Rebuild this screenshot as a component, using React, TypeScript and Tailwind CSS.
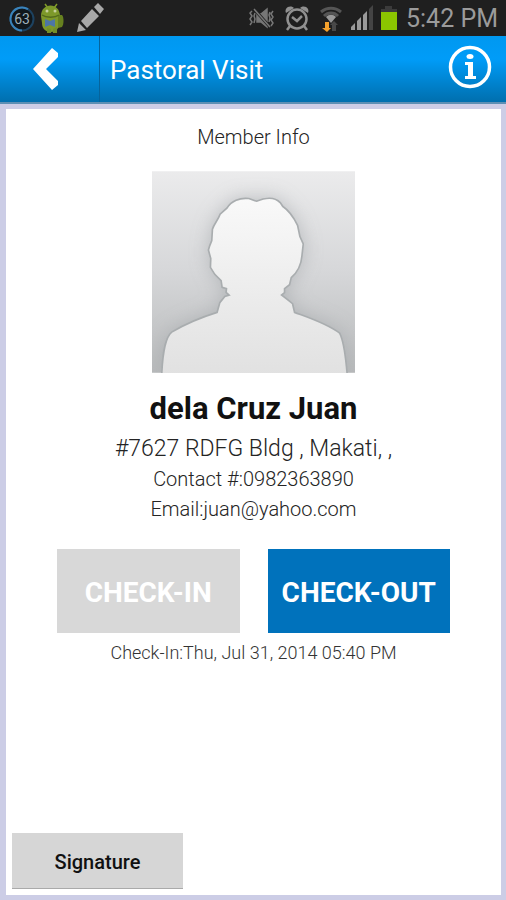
import type { ReactNode } from 'react';

const member = {
  name: 'dela Cruz Juan',
  address: '#7627 RDFG Bldg , Makati, ,',
  contact: '0982363890',
  email: 'juan@yahoo.com',
  checkIn: 'Thu, Jul 31, 2014 05:40 PM',
};

function StatusBar() {
  return (
    <div className="flex h-9 items-center justify-between bg-[#1f1f1f] pr-2 pl-2">
      <div className="flex items-center gap-2">
        <svg width="28" height="30" viewBox="0 0 28 30">
          <circle cx="14" cy="16" r="11.5" fill="#10171c" stroke="#1d4260" strokeWidth="2" />
          <path d="M14 27.5A11.5 11.5 0 1 1 20 6.2" fill="none" stroke="#3a83bb" strokeWidth="2" />
          <text x="14" y="21" textAnchor="middle" fontSize="14" fill="#9dafba" className="font-[Roboto]">63</text>
        </svg>
        <svg width="24" height="32" viewBox="0 0 24 32" className="-ml-1">
          <path d="m5 2 3 4m9-4-3 4" stroke="#829c28" strokeWidth="1.5" />
          <path d="M1 14C1 0 20 0 20 14l-1 7c0 6-3 9-8 9s-9-3-9-9z" fill="#7d992a" />
          <path d="M18 13h4c2 2 2 9 0 12l-4 1z" fill="#66801f" />
          <path d="M7 26v5h4v-4m2 0v4h4v-6" fill="#748e27" />
          <path d="M2 13c4 3 13 3 17 0" fill="none" stroke="#536b1b" strokeWidth="1.5" />
          <circle cx="7" cy="9" r="1.5" fill="#c5d09b" />
          <circle cx="15" cy="9" r="1.5" fill="#c5d09b" />
          <path d="m5 17 5 2 5-2v8l-5-2-5 2z" fill="#4d76a5" />
        </svg>
        <svg width="28" height="30" viewBox="0 0 28 30" className="ml-1">
          <path d="m1 29 2-9 7 7zM5 18 16 6l7 7-12 12zM18 4l4-4 6 6-4 5z" fill="#a8a8a8" />
        </svg>
      </div>
      <div className="flex items-center gap-1">
        <svg width="28" height="26" viewBox="0 0 28 26" className="mr-1" fill="none" stroke="#777" strokeWidth="1.5">
          <path d="M9 9h4l6-5v18l-6-5H9z" fill="#777" />
          <path d="m7 5 15 17" stroke="#222" strokeWidth="3" />
          <path d="m6 4 16 18M4 6 2 8l2 3-2 3 2 3-2 3M7 8l-1 3 1 3-1 4M22 7l-1 3 1 3-1 4M25 6l-2 3 2 3-2 3 2 3-2 3" />
        </svg>
        <svg width="26" height="28" viewBox="0 0 26 28" fill="none" stroke="#909090" strokeWidth="2.5">
          <circle cx="13" cy="15" r="9.5" />
          <path d="M2 9C0 5 5 0 10 4zM24 9c2-4-3-9-8-5z" fill="#909090" stroke="none" />
          <path d="m6 22-3 4m17-4 3 4M8 13l5 4 5-5" />
        </svg>
        <svg width="28" height="28" viewBox="0 0 28 28" className="ml-1">
          <path d="M3 8c6-5 14-5 20 0M6 12c4-4 10-4 14 0" fill="none" stroke="#555" strokeWidth="3" />
          <path d="M8 13c3-3 7-3 10 0l-5 6z" fill="#999" />
          <path d="M7 18h4v6h2l-4 4-5-4h3z" fill="#f5a12c" />
          <path d="m16 17 4 4h-2v6h-4v-6h-2z" fill="#484848" />
        </svg>
        <svg width="26" height="28" viewBox="0 0 26 28">
          <path d="M1 26v-3l4-4v7zM7 26v-9l4-4v13zM13 26V11l4-4v19z" fill="#999" />
          <path d="M19 26V5l4-4v25z" fill="#444" />
        </svg>
        <svg width="18" height="26" viewBox="0 0 18 26">
          <path d="M5 1h7v3h5v3H1V4h4z" fill="#3b3b3b" />
          <path d="M1 7h16v18H1z" fill="#8bc500" />
        </svg>
        <span className="ml-1 pt-[2px] text-[25px] leading-8 text-[#9b9b9b]">5:42 PM</span>
      </div>
    </div>
  );
}

function Header() {
  return (
    <header className="flex h-[68px] items-stretch border-b-2 border-[#5d8fb4] bg-linear-to-b from-[#0098f0] via-[#009cf8] via-35% to-[#006fae]">
      <button aria-label="Back" className="flex w-[100px] items-center justify-center border-r border-[#06649c] pr-2">
        <svg width="26" height="42" viewBox="0 0 26 42" fill="#fff">
          <path d="M0 21 19 0l6 5v4L13 21l12 12v4l-6 5z" />
        </svg>
      </button>
      <h1 className="flex-1 self-center pt-[2px] pl-[10px] text-[26px] leading-8 text-white">Pastoral Visit</h1>
      <button aria-label="Information" className="mr-[14px] mb-1 self-center">
        <svg width="44" height="44" viewBox="0 0 44 44">
          <circle cx="22" cy="22" r="19.5" fill="none" stroke="#fff" strokeWidth="3.5" />
          <ellipse cx="22" cy="11.5" rx="3.5" ry="2.5" fill="#fff" />
          <path d="M17 17h8v14h3v3H17v-3h3V20h-3z" fill="#fff" />
        </svg>
      </button>
    </header>
  );
}

function Avatar() {
  const outline =
    'M66 645C68 600 72 535 96 516C140 490 190 470 232 457L240 428L255 409L268 405L259 397L260 386L247 382L244 362L225 343L212 322L213 296L206 270L210 257L216 242L218 208C222 193 235 180 241 163L262 144C274 125 300 112 327 116L350 124C375 113 404 110 421 128L429 140C450 154 464 178 473 196L480 230L490 252L486 288C484 315 470 339 454 353L449 374L434 386L434 398L425 405L442 418L458 431L464 457C510 474 560 490 599 519C615 550 617 600 622 645Z';
  return (
    <svg role="img" aria-label="Member photo" viewBox="37 34 608 604" className="h-[202px] w-[203px]">
      <defs>
        <linearGradient id="backdrop" x2="0" y2="1">
          <stop stopColor="#ebebec" />
          <stop offset=".5" stopColor="#d6d7d9" />
          <stop offset="1" stopColor="#b8babb" />
        </linearGradient>
        <linearGradient id="person" x2="0" y2="1">
          <stop stopColor="#f9f9f9" />
          <stop offset="1" stopColor="#e1e1e1" />
        </linearGradient>
        <filter id="shade" x="-30%" y="-30%" width="160%" height="160%">
          <feGaussianBlur stdDeviation="30" />
        </filter>
      </defs>
      <path d="M37 34h608v604H37z" fill="url(#backdrop)" />
      <path d={outline} fill="#a4a8ab" opacity=".7" filter="url(#shade)" />
      <path d={outline} fill="url(#person)" stroke="#a9adaf" strokeWidth="5" />
    </svg>
  );
}

function ActionButton({ children, disabled = false }: { children: ReactNode; disabled?: boolean }) {
  return (
    <button
      disabled={disabled}
      className="h-[84px] flex-1 bg-[#0072bc] pt-1 text-[28px] font-bold text-white disabled:bg-[#d8d8d8]"
    >
      {children}
    </button>
  );
}

export default function App() {
  return (
    <div className="flex min-h-screen flex-col bg-[#cccde6] font-[Roboto,sans-serif]">
      <StatusBar />
      <Header />
      <main className="m-[5px] ml-[6px] flex flex-1 flex-col items-center bg-white text-[#242424]">
        <h2 className="mt-4 text-[20px] leading-6 font-light">Member Info</h2>
        <div className="mt-[22px]">
          <Avatar />
        </div>
        <h3 className="mt-5 text-[31px] leading-8 font-bold text-[#111]">{member.name}</h3>
        <p className="mt-[10px] text-[23px] leading-7 font-light">{member.address}</p>
        <p className="mt-[2px] text-[20px] leading-7 font-light">Contact #:{member.contact}</p>
        <p className="mt-[2px] text-[20px] leading-7 font-light">Email:{member.email}</p>
        <div className="mt-[26px] flex gap-7 self-stretch px-[51px]">
          <ActionButton disabled>CHECK-IN</ActionButton>
          <ActionButton>CHECK-OUT</ActionButton>
        </div>
        <p className="mt-2 text-[18px] leading-6 font-light text-[#333]">Check-In:{member.checkIn}</p>
        <button className="mt-auto mb-[6px] ml-[6px] h-[56px] w-[171px] self-start border-b border-[#aaa] bg-[#d6d6d6] pt-[2px] text-[20px] font-medium text-[#111]">
          Signature
        </button>
      </main>
    </div>
  );
}
